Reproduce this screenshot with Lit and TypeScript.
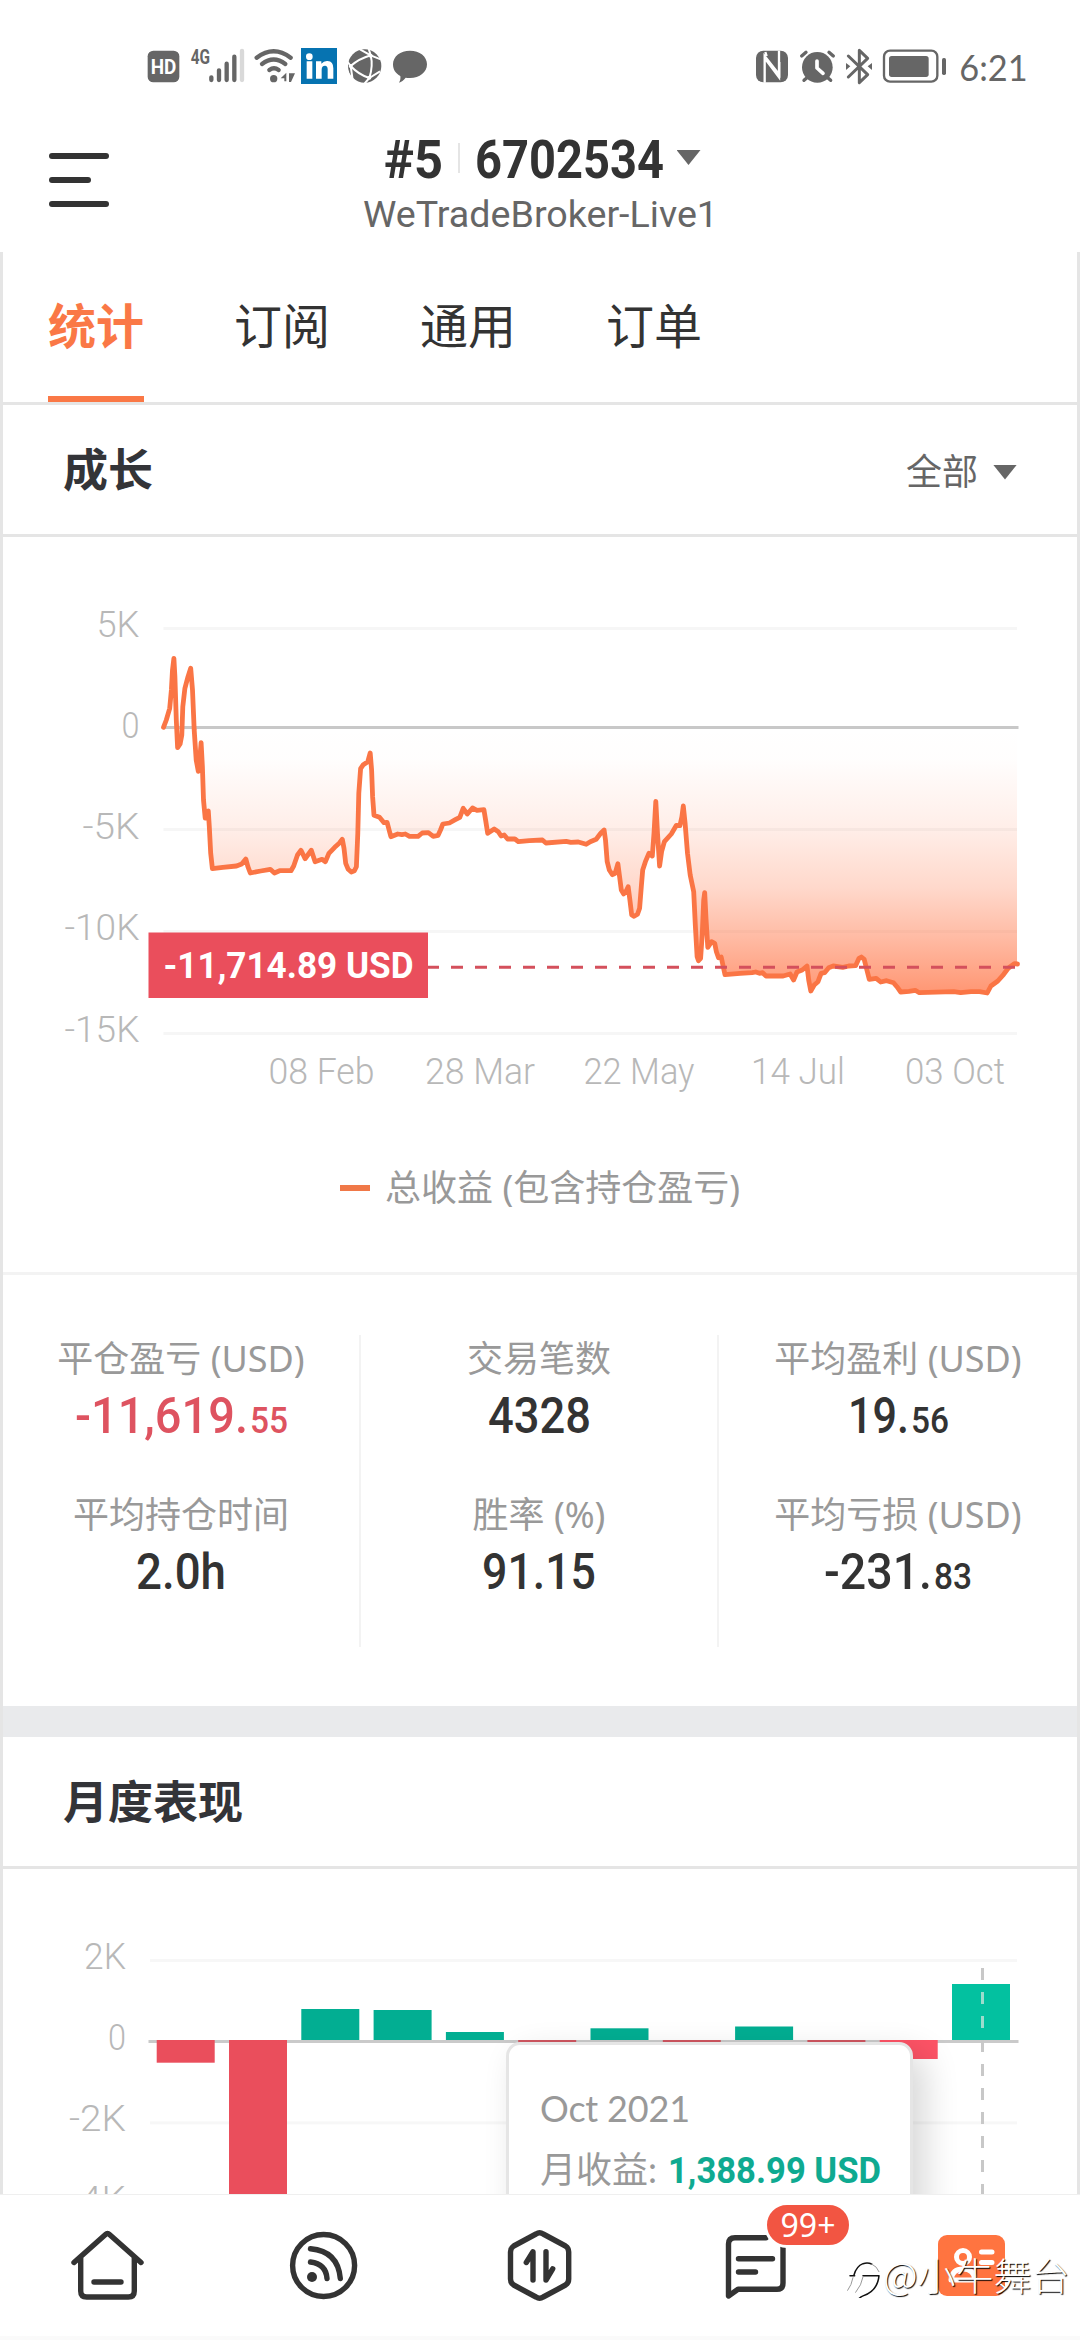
import { LitElement, html, svg, css } from "lit";
import { customElement } from "lit/decorators.js";

/** Equity samples in plot units; see toPoint for the mapping to pixels. */
const GROWTH: number[][] = [
  [358,442],[366,420],[376,385],[381,330],[384,270],[388,235],[391,290],[395,420],[399,503],[406,492],[411,465],[414,380],[420,325],[429,290],[437,265],
  [442,330],[447,450],[453,540],[459,574],[463,540],[467,488],[471,560],[474,660],[479,714],[488,693],[491,740],[495,820],[500,866],[530,862],[570,858],
  [585,852],[597,837],[603,860],[610,879],[640,873],[668,868],[680,879],[695,872],[728,872],[736,858],[747,825],[757,811],[769,836],[787,811],[798,845],
  [818,838],[828,845],[838,820],[855,802],[868,790],[877,778],[882,805],[887,850],[894,868],[903,876],[912,872],[918,860],[922,760],[925,640],[930,566],
  [938,554],[951,545],[958,519],[962,570],[965,650],[969,706],[985,712],[998,728],[1007,727],[1013,750],[1018,770],[1038,762],[1050,764],[1060,762],
  [1072,769],[1097,769],[1109,759],[1127,758],[1141,769],[1155,766],[1162,750],[1169,732],[1188,729],[1205,719],[1218,712],[1228,685],[1240,702],
  [1255,684],[1268,691],[1288,689],[1293,720],[1299,760],[1318,747],[1330,755],[1338,768],[1347,765],[1357,777],[1378,777],[1388,785],[1420,782],
  [1458,780],[1468,789],[1527,784],[1540,787],[1562,786],[1585,793],[1597,785],[1614,778],[1627,760],[1637,750],[1641,780],[1646,845],[1652,870],[1661,884],
  [1669,880],[1677,851],[1682,890],[1687,930],[1694,942],[1700,935],[1707,920],[1712,960],[1717,1005],[1724,1009],[1734,1003],[1740,985],[1745,920],
  [1749,870],[1757,845],[1767,820],[1777,828],[1782,760],[1787,664],[1792,760],[1798,858],[1804,815],[1812,785],[1832,762],[1847,736],[1857,737],
  [1863,710],[1867,678],[1872,730],[1879,820],[1887,885],[1897,935],[1902,1040],[1907,1130],[1911,1142],[1917,1135],[1922,1060],[1926,960],[1929,938],
  [1933,1020],[1938,1102],[1949,1085],[1958,1090],[1963,1115],[1969,1133],[1977,1131],[1982,1155],[1988,1184],[2032,1180],[2067,1178],[2077,1176],
  [2088,1180],[2097,1178],[2107,1188],[2157,1188],[2177,1182],[2187,1200],[2197,1176],[2212,1170],[2226,1158],[2231,1200],[2237,1233],[2247,1215],
  [2258,1205],[2267,1180],[2277,1178],[2289,1163],[2302,1158],[2330,1162],[2347,1158],[2367,1157],[2377,1135],[2384,1131],[2392,1138],[2400,1170],
  [2407,1198],[2427,1195],[2440,1206],[2457,1202],[2477,1208],[2487,1220],[2498,1236],[2522,1234],[2540,1231],[2552,1238],[2652,1235],[2672,1238],
  [2702,1235],[2727,1235],[2749,1239],[2760,1218],[2780,1203],[2797,1183],[2810,1165],[2828,1151],[2837,1152],
];

const toPoint = ([x, y]: number[]) => `${(40.2 + x / 2.903).toFixed(1)},${(580 + y / 3).toFixed(1)}`;
const LINE = GROWTH.map(toPoint).join(" ");

const GROWTH_Y = [
  { t: "5K", y: 628.3, w: 43 },
  { t: "0", y: 727.3, w: 18 },
  { t: "-5K", y: 829.3, w: 57 },
  { t: "-10K", y: 931.3, w: 75 },
  { t: "-15K", y: 1033.3, w: 75 },
];
const GROWTH_BASE = [637, 738, 839, 940, 1042];
const GROWTH_X = [
  { t: "08 Feb", x: 268.5, w: 106 },
  { t: "28 Mar", x: 425, w: 110 },
  { t: "22 May", x: 583.5, w: 111 },
  { t: "14 Jul", x: 751, w: 94 },
  { t: "03 Oct", x: 905, w: 100 },
];
const MONTH_Y = [
  { t: "2K", y: 1960.3, base: 1969, w: 42 },
  { t: "0", y: 2041.3, base: 2050, w: 18 },
  { t: "-2K", y: 2122.7, base: 2131, w: 57 },
  { t: "-4K", y: 2204, base: 2212, w: 57 },
];
/** Signed bar heights in pixels, oldest month first. */
const MONTHS = [-22.7, -190, 31, 30, 8, -3, 11.7, -3, 13.5, -3, -19, 56];

interface Stat { label: string; main: string; mw: number; frac?: string; loss?: boolean }
const STATS: Stat[][] = [
  [
    { label: "平仓盈亏 (USD)", main: "-11,619.", mw: 173, frac: "55", loss: true },
    { label: "平均持仓时间", main: "2.0h", mw: 90 },
  ],
  [
    { label: "交易笔数", main: "4328", mw: 103 },
    { label: "胜率 (%)", main: "91.15", mw: 114 },
  ],
  [
    { label: "平均盈利 (USD)", main: "19.", mw: 61, frac: "56" },
    { label: "平均亏损 (USD)", main: "-231.", mw: 108, frac: "83" },
  ],
];

/** Text drawn at a fixed advance width, with its baseline at the bottom edge. */
const fit = (text: string, width: number, size: number, cls: string) => html`
  <svg class="fit ${cls}" width=${width} height=${Math.round(size * 0.71)}>
    <text y=${Math.round(size * 0.71)} font-size=${size} textLength=${width} lengthAdjust="spacingAndGlyphs">${text}</text>
  </svg>`;

@customElement("status-bar")
class StatusBar extends LitElement {
  static styles = css`
    :host { display: flex; justify-content: space-between; height: 120px; padding: 30px 0 0 130px; box-sizing: border-box; }
    text { font-family: Roboto, "Liberation Sans", sans-serif; }
    .b { font-weight: 700; }
    .time { font-family: Lato, Roboto, sans-serif; font-weight: 400; }
  `;
  render() {
    return html`
      <svg width="320" height="80" viewBox="0 0 960 240" fill="#666">
        <rect x="53" y="62" width="95" height="95" rx="17" />
        <text class="b" x="62" y="133" font-size="58" fill="#fff" textLength="77" lengthAdjust="spacingAndGlyphs">HD</text>
        <text class="b" x="182" y="102" font-size="59" textLength="58" lengthAdjust="spacingAndGlyphs">4G</text>
        <g stroke="#666" stroke-width="13" stroke-linecap="round">
          <path d="M244 142v8M267 121v29M290 101v49M313 80v70" />
          <path stroke="#d9d9d9" d="M336 63v87" />
        </g>
        <g fill="none" stroke="#666" stroke-width="13" stroke-linecap="round">
          <path d="M380 83Q431 44 482 83" />
          <path d="M396 102Q431 75 466 102" />
          <path d="M418 120Q432 110 446 120" />
        </g>
        <circle cx="431" cy="146" r="11" />
        <path d="M452 145L469 128V154H463V145ZM477 130H495L483 156H477Z" />
        <rect x="513" y="54" width="108" height="108" fill="#0673b1" />
        <circle cx="538" cy="80" r="10" fill="#fff" />
        <path d="M530 94h17v52h-17zM558 94h16v7q8-9 19-8 17 1 17 22v31h-17v-28q0-11-8-11-10 0-10 12v27h-17z" fill="#fff" />
        <circle cx="704" cy="108" r="50" />
        <g fill="none" stroke="#fff" stroke-width="6">
          <path d="M662 108Q688 86 722 76M722 76Q730 108 718 144M662 108Q686 134 718 144M662 108L650 92M662 108L668 150M722 76L690 58M722 76L752 88M718 144L704 160M718 144L750 124M722 76L716 56" />
        </g>
        <g fill="#fff"><circle cx="662" cy="108" r="6" /><circle cx="722" cy="77" r="6" /><circle cx="718" cy="143" r="6" /></g>
        <path d="M840 62c29 0 51 17 51 41s-22 41-51 41c-5 0-9 0-13-1-6 8-13 13-20 15 4-6 5-13 4-20-14-7-22-19-22-35 0-24 22-41 51-41z" />
      </svg>
      <svg width="340" height="80" viewBox="0 0 1020 240" fill="#666">
        <rect x="48" y="62" width="96" height="95" rx="22" />
        <path fill="none" stroke="#fff" stroke-width="7" d="M74 158V78L118 134V96M117 62V142L75 86M76 66L80 78" />
        <circle cx="232" cy="112" r="46" />
        <path fill="none" stroke="#666" stroke-width="10" stroke-linecap="round" d="M185 78L198 67M280 78L267 67M200 144L192 151M264 144L272 151" />
        <path fill="none" stroke="#fff" stroke-width="11" stroke-linecap="round" stroke-linejoin="round" d="M231 93V114L249 130" />
        <path fill="none" stroke="#666" stroke-width="9" stroke-linejoin="round" stroke-linecap="round" d="M325 78L383 134L358 158V61L383 85L325 141" />
        <path d="M318 99l13 10-13 11zM396 99l-13 10 13 11z" />
        <rect x="432" y="62" width="160" height="93" rx="18" fill="none" stroke="#666" stroke-width="7" />
        <rect x="447" y="78" width="119" height="63" rx="8" />
        <rect x="606" y="84" width="12" height="51" rx="5" />
        <text class="time" x="658" y="153" font-size="109" textLength="205" lengthAdjust="spacingAndGlyphs">6:21</text>
      </svg>`;
  }
}

@customElement("growth-chart")
class GrowthChart extends LitElement {
  static styles = css`
    :host { display: block; height: 735px; }
    svg { display: block; }
    text { font-family: Roboto, sans-serif; font-size: 36px; }
    .axis { fill: #b8b8b8; font-weight: 300; }
    .tag { fill: #fff; font-weight: 700; }
    .legend { display: flex; align-items: center; justify-content: center; gap: 15px; height: 121px;
      font: 400 36px/48px "Noto Sans", "Noto Sans CJK SC", sans-serif; color: #999; }
    .legend i { width: 30px; height: 6px; background: #f07848; }
  `;
  render() {
    return html`
      <svg width="1074" height="590" viewBox="3 537 1074 590">
        <defs>
          <linearGradient id="area" gradientUnits="userSpaceOnUse" x1="0" x2="0" y1="727" y2="995">
            <stop offset="0" stop-color="#ff7040" stop-opacity="0" />
            <stop offset="0.12" stop-color="#ff7040" stop-opacity="0.01" />
            <stop offset="0.38" stop-color="#ff7040" stop-opacity="0.12" />
            <stop offset="0.6" stop-color="#ff7040" stop-opacity="0.27" />
            <stop offset="0.78" stop-color="#ff7040" stop-opacity="0.47" />
            <stop offset="1" stop-color="#ff7040" stop-opacity="0.74" />
          </linearGradient>
          <clipPath id="below"><rect x="163" y="727" width="854" height="300" /></clipPath>
        </defs>
        ${GROWTH_Y.map((g, i) => svg`
          <rect x="163.5" y=${g.y - 1.3} width=${g.t === "0" ? 855 : 853.5} height="3" fill=${g.t === "0" ? "#c8c8c8" : "#f6f6f6"} />
          <text class="axis" x=${139.5 - g.w} y=${GROWTH_BASE[i]} textLength=${g.w} lengthAdjust="spacingAndGlyphs">${g.t}</text>`)}
        ${GROWTH_X.map((g) => svg`<text class="axis" x=${g.x} y="1084" textLength=${g.w} lengthAdjust="spacingAndGlyphs">${g.t}</text>`)}
        <polygon points=${`163,727 ${LINE} 1017,727`} fill="url(#area)" clip-path="url(#below)" />
        <polyline points=${LINE} fill="none" stroke="#fa7545" stroke-width="4.8" stroke-linejoin="round" stroke-linecap="round" />
        <path d="M427 967.3H1017" stroke="#d4505c" stroke-width="3" stroke-dasharray="12 12" />
        <rect x="148.5" y="932.5" width="279.5" height="65.5" fill="#ea4e5c" />
        <text class="tag" x="163.5" y="978" textLength="250" lengthAdjust="spacingAndGlyphs">-11,714.89 USD</text>
      </svg>
      <div class="legend"><i></i><span>总收益 (包含持仓盈亏)</span></div>`;
  }
}

@customElement("month-chart")
class MonthChart extends LitElement {
  static styles = css`
    :host { display: block; position: relative; height: 325px; overflow: hidden; }
    svg { display: block; }
    text { font-family: Roboto, sans-serif; font-size: 36px; }
    .axis { fill: #b8b8b8; font-weight: 300; }
    .tip { position: absolute; left: 503px; top: 173px; width: 407px; height: 220px; box-sizing: border-box; padding: 33px 0 0 31px;
      border: 3px solid #e5e5e5; border-radius: 14px; background: #fff; box-shadow: 12px 12px 34px rgba(0, 0, 0, 0.16);
      color: #999; font: 400 36px/63px Lato, "Noto Sans CJK SC", sans-serif; }
    .date { line-height: 60px; letter-spacing: -0.2px; }
    .row { display: flex; align-items: baseline; gap: 11px; }
    .fit { overflow: visible; fill: #0faa91; }
    .fit text { font-weight: 700; }
  `;
  render() {
    return html`
      <svg width="1074" height="325" viewBox="3 1869 1074 325">
        ${MONTH_Y.map((g) => svg`
          <rect x=${g.t === "0" ? 148.5 : 150} y=${g.y - 1.3} width=${g.t === "0" ? 870 : 867} height="3" fill=${g.t === "0" ? "#cacaca" : "#f7f7f7"} />
          <text class="axis" x=${126 - g.w} y=${g.base} textLength=${g.w} lengthAdjust="spacingAndGlyphs">${g.t}</text>`)}
        ${MONTHS.map((v, i) => svg`
          <rect x=${156.7 + i * 72.3} y=${v > 0 ? 2040 - v : 2040} width="58" height=${Math.abs(v)}
            fill=${v > 0 ? (i === 11 ? "#03c1a0" : "#02ae92") : i === 10 ? "#fd5366" : v === -3 ? "#cf5660" : "#ea4e5c"} />`)}
        <path d="M982.5 1968V2194" stroke="#c8c8c8" stroke-width="3" stroke-dasharray="12 12" />
        <path d="M982.5 1992V2040" stroke="#9ddccc" stroke-width="3" stroke-dasharray="12 12" />
      </svg>
      <div class="tip">
        <div class="date">Oct 2021</div>
        <div class="row"><span>月收益:</span>${fit("1,388.99 USD", 213, 37, "")}</div>
      </div>`;
  }
}

@customElement("nav-bar")
class NavBar extends LitElement {
  static styles = css`
    :host { display: block; position: relative; height: 146px; box-sizing: border-box; border-top: 1px solid #efefef; border-bottom: 4px solid #fafafa; background: #fff; }
    .items { display: grid; grid-template-columns: repeat(5, 216px); height: 141px; }
    svg { display: block; fill: none; stroke: #333; stroke-width: 5.4; stroke-linecap: round; stroke-linejoin: round; }
    .badge { position: absolute; left: 764px; top: 7px; width: 88px; height: 46px; box-sizing: border-box; border: 3px solid #fff; border-radius: 23px;
      background: #f25542; color: #fff; font: 400 32px/40px "Noto Sans", sans-serif; text-align: center; }
    .mark { position: absolute; left: 842px; top: 51px; display: flex; align-items: center; color: #fff;
      font: 300 38px/56px "Noto Sans CJK SC", sans-serif; text-shadow: 1px 1px 1px #000; white-space: nowrap; }
    .mark svg { stroke: #111; stroke-width: 4.5; }
    .mark .soft { stroke: #999; stroke-width: 3; }
  `;
  render() {
    return html`
      <div class="items">
        <svg width="216" height="141" viewBox="0 2195 216 141">
          <path d="M74 2262.5L105.5 2234.5Q107.5 2232.5 109.5 2234.5L141 2262.5M80.7 2257V2291Q80.7 2297 86.7 2297H128.3Q134.3 2297 134.3 2291V2257M94 2282H121" />
        </svg>
        <svg width="216" height="141" viewBox="216 2195 216 141">
          <circle cx="323.6" cy="2265.5" r="31" />
          <path d="M310.5 2262Q326 2264 327 2278.5M310.5 2248.7Q338 2251 340.3 2278.5" />
          <circle cx="312" cy="2277" r="5" fill="#333" stroke="none" />
        </svg>
        <svg width="216" height="141" viewBox="432 2195 216 141">
          <path d="M536 2234Q539.6 2231.6 543.2 2234L565.5 2246Q568.7 2248 568.7 2252V2279Q568.7 2283 565.5 2285L543.2 2297Q539.6 2299.4 536 2297L513.7 2285Q510.5 2283 510.5 2279V2252Q510.5 2248 513.7 2246Z" />
          <path d="M526.3 2262.5L533 2251.8V2280M546 2251.8V2280L552.7 2268.8" />
        </svg>
        <svg width="216" height="141" viewBox="648 2195 216 141">
          <path d="M783 2240V2283Q783 2289.3 777 2289.3H738L728.5 2296V2244Q728.5 2237.7 735 2237.7H766M738.5 2258.7H772.5M738.5 2272H755.5" />
        </svg>
        <svg width="216" height="141" viewBox="864 2195 216 141">
          <rect x="938" y="2235" width="67" height="61" rx="9" fill="#ff7440" stroke="none" />
          <g stroke="#fff" stroke-width="5">
            <circle cx="963" cy="2257" r="6.5" />
            <path d="M981.5 2252H992M981.5 2262.5H992M951 2280Q952 2269 963 2269T975 2280Z" />
          </g>
        </svg>
      </div>
      <div class="badge">99+</div>
      <div class="mark">
        <svg width="41" height="48" viewBox="483 213 123 144">
          <path d="M507 290H521M519 288Q526 262 546 254Q560 250 572 255M546 290H594Q590 335 548 350Q533 356 528 367" />
          <path class="soft" d="M572 255Q588 262 594 278M516 296Q512 318 500 334M546 294Q542 318 524 340" />
        </svg>
        <span>@小牛舞台</span>
      </div>`;
  }
}

@customElement("app-root")
class AppRoot extends LitElement {
  static styles = css`
    :host { display: block; width: 1080px; height: 2340px; overflow: hidden; background: #fff; color: #333; font-family: Roboto, "Noto Sans CJK SC", sans-serif; }
    .fit { overflow: visible; fill: currentColor; display: inline-block; }
    .bold text { font-weight: 700; }
    .med text { font-weight: 500; }
    .head { display: grid; grid-template-columns: 120px 1fr 120px; height: 132px; }
    .menu { display: flex; flex-direction: column; gap: 18px; padding: 33px 0 0 49px; }
    .menu i { width: 60px; height: 6px; border-radius: 3px; background: #333; }
    .menu i.short { width: 42px; }
    .account { display: flex; flex-direction: column; align-items: center; gap: 23px; padding-top: 20px; }
    .number { display: flex; align-items: flex-start; height: 38px; padding-left: 4px; }
    .sep { width: 2px; height: 30px; margin: 3px 15px 0 15px; background: #e5e5e5; }
    .tri { width: 24px; height: 15px; background: #666; clip-path: polygon(0 0, 100% 0, 50% 100%); }
    .number .tri { margin: 10px 0 0 13px; }
    .server { color: #666; display: flex; }
    main { height: 1942px; box-sizing: border-box; border: solid #e5e5e5; border-width: 0 3px; overflow: hidden; }
    .tabs { display: flex; gap: 90px; height: 153px; box-sizing: border-box; padding-left: 45px; border-bottom: 3px solid #e5e5e5; }
    .tab { width: 96px; height: 150px; box-sizing: border-box; padding-top: 4px; font-size: 48px; line-height: 144px; white-space: nowrap; }
    .tab.on { color: #fa7846; font-weight: 700; border-bottom: 6px solid #fa7846; }
    .title { display: flex; align-items: center; justify-content: space-between; height: 132px; box-sizing: border-box; padding: 4px 60px 0 60px; border-bottom: 3px solid #e5e5e5; }
    .title h2 { margin: 0; font-size: 45px; font-weight: 700; color: #333438; line-height: 60px; }
    .range { display: flex; align-items: center; gap: 15px; color: #666; font-size: 36px; line-height: 54px; padding-top: 2px; }
    .range .tri { margin-top: -1px; }
    .stats { display: grid; grid-template-columns: repeat(3, 358px); height: 434px; box-sizing: border-box; padding: 60px 0 59px; border-top: 3px solid #f3f3f3; }
    .col { height: 312px; box-sizing: border-box; border-right: 2px solid #f3f3f3; }
    .col:last-child { border-right: 0; }
    .stat { height: 156px; display: flex; flex-direction: column; align-items: center; gap: 14px; }
    .label { font: 400 36px/48px "Noto Sans", "Noto Sans CJK SC", sans-serif; color: #999; }
    .value { display: flex; align-items: flex-end; gap: 2px; height: 36px; }
    .loss { color: #de5360; }
    .band { height: 31px; background: #e9eaec; }
  `;
  render() {
    return html`
      <status-bar></status-bar>
      <div class="head">
        <div class="menu"><i></i><i class="short"></i><i></i></div>
        <div class="account">
          <div class="number">
            ${fit("#5", 59, 53, "bold")}<span class="sep"></span>${fit("6702534", 189, 53, "bold")}<span class="tri"></span>
          </div>
          <div class="server">${fit("WeTradeBroker-Live1", 355, 36, "")}</div>
        </div>
      </div>
      <main>
        <div class="tabs">
          <div class="tab on">统计</div><div class="tab">订阅</div><div class="tab">通用</div><div class="tab">订单</div>
        </div>
        <div class="title"><h2>成长</h2><div class="range">全部<span class="tri"></span></div></div>
        <growth-chart></growth-chart>
        <div class="stats">
          ${STATS.map((col) => html`<div class="col">${col.map((s) => html`
            <div class="stat">
              <div class="label">${s.label}</div>
              <div class="value ${s.loss ? "loss" : ""}">
                ${fit(s.main, s.mw, 50, "med")}${s.frac ? fit(s.frac, 38, 36, "med") : ""}
              </div>
            </div>`)}</div>`)}
        </div>
        <div class="band"></div>
        <div class="title"><h2>月度表现</h2></div>
        <month-chart></month-chart>
      </main>
      <nav-bar></nav-bar>`;
  }
}
